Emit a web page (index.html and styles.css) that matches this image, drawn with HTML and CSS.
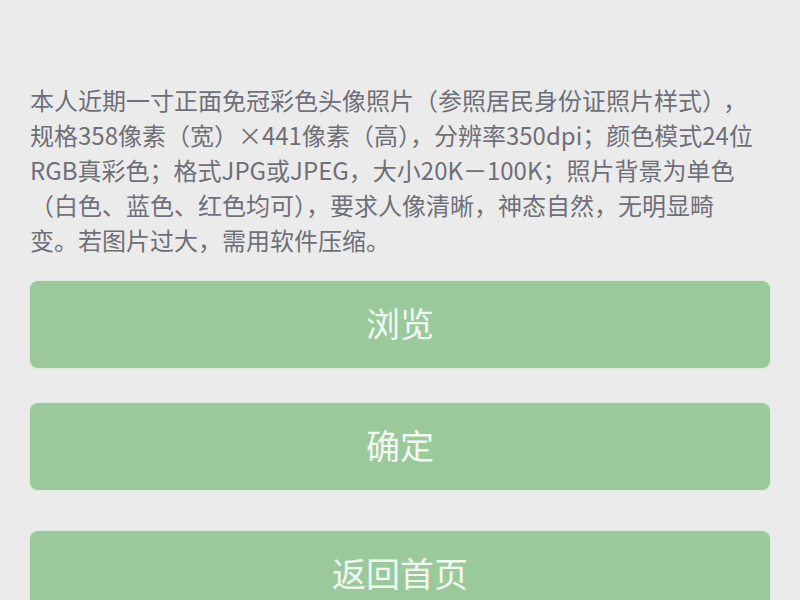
FILE: index.html
```html
<!DOCTYPE html>
<html lang="zh-CN">
<head>
<meta charset="utf-8">
<title>上传照片</title>
<link rel="stylesheet" href="styles.css">
</head>
<body>
<main class="page">
  <p class="notice">
    <span class="line">本人近期一寸正面免冠彩色头像照片（参照居民身份证照片样式）<span class="punct-gap">，</span></span>
    <span class="line">规格358像素（宽）×441像素（高），分辨率350dpi；颜色模式24位</span>
    <span class="line">RGB真彩色；格式JPG或JPEG，大小20K－100K；照片背景为单色</span>
    <span class="line">（白色、蓝色、红色均可），要求人像清晰，神态自然，无明显畸</span>
    <span class="line">变。若图片过大，需用软件压缩。</span>
  </p>
  <div class="actions">
    <button class="btn" type="button">浏览</button>
    <button class="btn btn-confirm" type="button">确定</button>
    <button class="btn btn-home" type="button">返回首页</button>
  </div>
</main>
</body>
</html>
```

FILE: styles.css
```css
html, body {
  margin: 0;
  padding: 0;
  background: #ebebeb;
}

body {
  font-family: "Noto Sans CJK SC", "Noto Sans", sans-serif;
  overflow: hidden;
  height: 600px;
}

.page {
  padding: 82px 30px 0;
}

.notice {
  margin: 0;
  color: #6f6f78;
  font-size: 24px;
  line-height: 35px;
}

.line {
  display: block;
  white-space: nowrap;
}

.punct-gap {
  margin-left: 9px;
}

.actions {
  display: flex;
  flex-direction: column;
  margin-top: 24px;
}

.btn {
  display: flex;
  align-items: center;
  justify-content: center;
  height: 87px;
  padding: 0 0 4px;
  border: none;
  border-radius: 8px;
  background: #9ac99c;
  box-shadow: 0 0 0 1px #dcebdc, 0 1px 1px rgba(0, 0, 0, 0.08);
  color: #f3f7f1;
  font-family: "Noto Sans CJK SC", "Noto Sans", sans-serif;
  font-size: 34px;
  font-weight: 400;
  width: 100%;
}

.btn-confirm {
  margin-top: 35px;
}

.btn-home {
  margin-top: 41px;
}
```
